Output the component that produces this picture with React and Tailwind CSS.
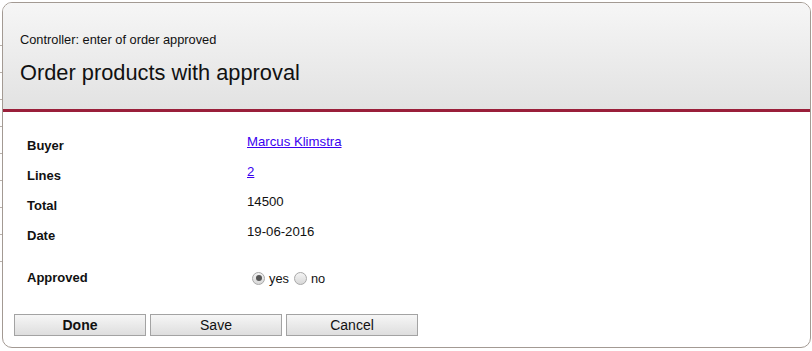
import React, { useState } from "react";

const rows = [
  { label: "Buyer", value: "Marcus Klimstra", link: true },
  { label: "Lines", value: "2", link: true },
  { label: "Total", value: "14500" },
  { label: "Date", value: "19-06-2016" },
];

const Radio = ({ checked, onClick }) => (
  <span
    onClick={onClick}
    className="inline-flex h-[13px] w-[13px] items-center justify-center rounded-full border border-[#a8a8a8] bg-gradient-to-b from-[#f4f4f4] to-[#d8d8d8] cursor-pointer"
  >
    {checked && <span className="h-[6px] w-[6px] rounded-full bg-[#555]" />}
  </span>
);

const Btn = ({ children, bold }) => (
  <button
    className={`h-[22px] w-[132px] border border-[#a3a3a3] bg-gradient-to-b from-[#f6f6f6] to-[#dedede] text-[14px] leading-none text-[#111] ${
      bold ? "font-bold" : ""
    }`}
  >
    {children}
  </button>
);

export default function App() {
  const [approved, setApproved] = useState(true);

  return (
    <div className="relative h-[351px] w-[812px] bg-white font-['Liberation_Sans',Arial,sans-serif] text-[#111]">
      {/* ticks of the list behind the panel */}
      <div className="absolute left-0 top-[45px] flex w-[3px] flex-col gap-[26px]">
        {[0, 1, 2, 3, 4, 5, 6, 7, 8].map((i) => (
          <div key={i} className="h-px w-[3px] bg-[#b8b0aa]" />
        ))}
      </div>

      <div className="absolute left-[2px] top-[2px] h-[346px] w-[809px] overflow-hidden rounded-[10px] border border-[#a39a93] bg-white">
        {/* header */}
        <div className="h-[109px] border-b-[3px] border-[#9a1f3a] bg-gradient-to-b from-[#f6f6f6] to-[#e2e2e2] pl-[17px] pt-[30px]">
          <div className="text-[12.8px] leading-[14px]">
            Controller: enter of order approved
          </div>
          <div className="mt-[13px] text-[21.8px] leading-[26px]">
            Order products with approval
          </div>
        </div>

        {/* body */}
        <div className="pl-[24px] pt-[19px]">
          {rows.map((r) => (
            <div key={r.label} className="flex h-[30px]">
              <div className="w-[220px] text-[13px] font-bold leading-[30px]">
                {r.label}
              </div>
              <div className="pt-[4px] text-[13.2px] leading-[14px]">
                {r.link ? (
                  <a href="#" className="text-[#3a00f0] underline">
                    {r.value}
                  </a>
                ) : (
                  r.value
                )}
              </div>
            </div>
          ))}

          <div className="mt-[12px] flex h-[30px] items-center">
            <div className="w-[225px] text-[13px] font-bold">Approved</div>
            <div className="flex items-center text-[12.8px]">
              <Radio checked={approved} onClick={() => setApproved(true)} />
              <span className="ml-[4px] mr-[5px] pt-[2px]">yes</span>
              <Radio checked={!approved} onClick={() => setApproved(false)} />
              <span className="ml-[4px] pt-[2px]">no</span>
            </div>
          </div>
        </div>

        {/* actions */}
        <div className="mt-[21px] flex gap-[4px] pl-[11px]">
          <Btn bold>Done</Btn>
          <Btn>Save</Btn>
          <Btn>Cancel</Btn>
        </div>
      </div>
    </div>
  );
}
